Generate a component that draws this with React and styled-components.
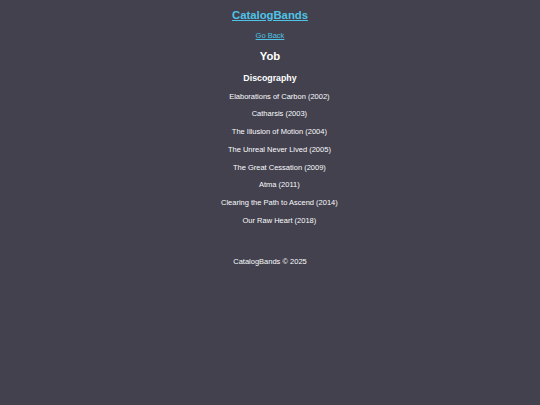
import React from "react";
import styled, { createGlobalStyle } from "styled-components";

const Global = createGlobalStyle`
  html, body {
    margin: 0;
    padding: 0;
    background: #42414d;
    min-height: 100%;
  }
  body {
    font-family: "Liberation Sans", Arial, sans-serif;
    color: #fbfbfe;
  }
`;

const Page = styled.div`
  min-height: 405px;
  background: #42414d;
  display: flex;
  flex-direction: column;
  align-items: center;
  text-align: center;
`;

const Header = styled.header`
  display: flex;
  flex-direction: column;
  align-items: center;
  padding-top: 8px;
`;

const Brand = styled.a`
  font-size: 11.3px;
  font-weight: bold;
  line-height: 14px;
  color: #4fc3e6;
  text-decoration: underline;
`;

const Back = styled.a`
  margin-top: 9px;
  font-size: 7.5px;
  line-height: 10px;
  color: #4fc3e6;
  text-decoration: underline;
`;

const BandName = styled.h2`
  margin: 8px 0 0;
  font-size: 11.3px;
  line-height: 14px;
  font-weight: bold;
  color: #ffffff;
`;

const SectionTitle = styled.h3`
  margin: 9.5px 0 0;
  font-size: 8.8px;
  line-height: 11px;
  font-weight: bold;
  color: #ffffff;
`;

const List = styled.ul`
  list-style: none;
  margin: 4.2px 0 0;
  padding: 0 0 0 18.8px;
`;

const Item = styled.li`
  font-size: 7.5px;
  line-height: 17.7px;
  color: #fbfbfe;
`;

const Footer = styled.footer`
  margin-top: 27.5px;
  font-size: 7.5px;
  line-height: 10px;
  color: #fbfbfe;
`;

const albums = [
  "Elaborations of Carbon (2002)",
  "Catharsis (2003)",
  "The Illusion of Motion (2004)",
  "The Unreal Never Lived (2005)",
  "The Great Cessation (2009)",
  "Atma (2011)",
  "Clearing the Path to Ascend (2014)",
  "Our Raw Heart (2018)",
];

export default function App() {
  return (
    <Page>
      <Global />
      <Header>
        <Brand href="#">CatalogBands</Brand>
        <Back href="#">Go Back</Back>
      </Header>
      <BandName>Yob</BandName>
      <SectionTitle>Discography</SectionTitle>
      <List>
        {albums.map((a) => (
          <Item key={a}>{a}</Item>
        ))}
      </List>
      <Footer>CatalogBands © 2025</Footer>
    </Page>
  );
}
